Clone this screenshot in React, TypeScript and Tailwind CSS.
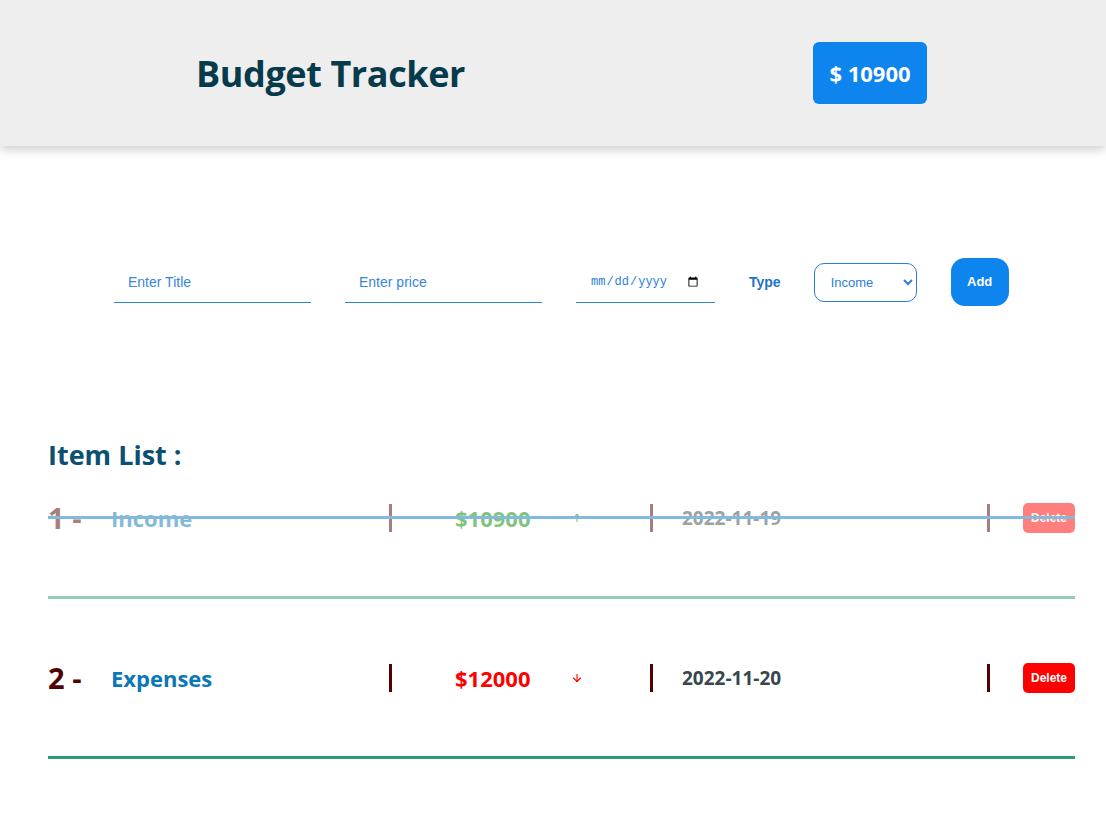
import { useState } from 'react'
import { ArrowUp, ArrowDown } from 'lucide-react'

type Item = {
  id: number
  title: string
  price: number
  date: string
  type: 'Income' | 'Expenses'
  done: boolean
}

const initialItems: Item[] = [
  { id: 1, title: 'Income', price: 10900, date: '2022-11-19', type: 'Income', done: true },
  { id: 2, title: 'Expenses', price: 12000, date: '2022-11-20', type: 'Expenses', done: false },
]

function Bar() {
  return <div className="w-[3px] h-[28px] bg-[#520000]" />
}

function ItemRow({ item, index, onDelete }: { item: Item; index: number; onDelete: (id: number) => void }) {
  const isIncome = item.type === 'Income'
  return (
    <div className={item.done ? 'opacity-50' : ''}>
      <div className="relative flex items-center h-[42px]">
        <div className="w-[63px] text-[29px] font-bold text-[#520000]">{index + 1} -</div>
        <div className="w-[278px] text-[22px] font-bold text-[#0a77b6]">{item.title}</div>
        <Bar />
        <div className="flex items-center w-[258px] pl-[63px]">
          <div className={`w-[116px] text-[22px] font-bold ${isIncome ? 'text-[#008800]' : 'text-[#ff0000]'}`}>
            ${item.price}
          </div>
          {isIncome ? (
            <ArrowUp size={12} strokeWidth={2.2} className="text-[#008800]" />
          ) : (
            <ArrowDown size={12} strokeWidth={2.2} className="text-[#ff0000]" />
          )}
        </div>
        <Bar />
        <div className="w-[334px] pl-[29px] text-[19px] font-bold text-[#36474f]">{item.date}</div>
        <Bar />
        <button
          onClick={() => onDelete(item.id)}
          className="ml-auto w-[52px] h-[30px] rounded-[5px] bg-[#ff0000] text-white text-[12px] font-bold font-['Liberation_Sans',Arial,sans-serif]"
        >
          Delete
        </button>
        {item.done && <div className="absolute left-0 right-0 top-[19px] h-[3px] bg-[#0a77b6]" />}
      </div>
      <div className="mt-[57px] h-[3px] bg-[#2f9a78]" />
    </div>
  )
}

export default function App() {
  const [items, setItems] = useState<Item[]>(initialItems)
  const [title, setTitle] = useState('')
  const [price, setPrice] = useState('')
  const [date, setDate] = useState('')
  const [type, setType] = useState<'Income' | 'Expenses'>('Income')

  const balance = 10900

  const addItem = () => {
    if (!title || !price) return
    setItems([...items, { id: Date.now(), title, price: Number(price), date, type, done: false }])
    setTitle('')
    setPrice('')
  }

  return (
    <div className="min-h-screen bg-white font-['Open_Sans','Noto_Sans',sans-serif]">
      <header className="flex items-center h-[146px] bg-[#eeeeee] shadow-[0_4px_10px_rgba(0,0,0,0.18)]">
        <h1 className="ml-[196px] mt-[2px] text-[36px] font-bold text-[#073b4c] tracking-[-0.4px]">Budget Tracker</h1>
        <div className="ml-auto mr-[179px] w-[114px] h-[62px] rounded-[6px] bg-[#0d84ee] flex items-center justify-center text-white text-[22px] font-bold">
          $ {balance}
        </div>
      </header>

      <div className="flex items-center gap-[34px] pl-[114px] mt-[112px] font-['Liberation_Sans',Arial,sans-serif]">
        <input
          value={title}
          onChange={(e) => setTitle(e.target.value)}
          placeholder="Enter Title"
          className="w-[197px] h-[41px] px-[14px] border-b border-[#2a86d6] text-[14px] text-[#2a7fd4] placeholder:text-[#3a86d8] outline-none"
        />
        <input
          value={price}
          onChange={(e) => setPrice(e.target.value)}
          placeholder="Enter price"
          className="w-[197px] h-[41px] px-[14px] border-b border-[#2a86d6] text-[14px] text-[#2a7fd4] placeholder:text-[#3a86d8] outline-none"
        />
        <input
          type="date"
          value={date}
          onChange={(e) => setDate(e.target.value)}
          className="w-[139px] h-[42px] px-[14px] border-b border-[#2a86d6] text-[12px] text-[#2a7fd4] font-['Liberation_Mono',monospace] outline-none"
        />
        <label className="-mr-[1px] text-[14px] font-bold text-[#1c74c9]">Type</label>
        <select
          value={type}
          onChange={(e) => setType(e.target.value as 'Income' | 'Expenses')}
          className="w-[103px] h-[39px] px-[12px] rounded-[10px] border border-[#2a7fd4] text-[13px] text-[#2a7fd4] bg-white outline-none"
        >
          <option>Income</option>
          <option>Expenses</option>
        </select>
        <button
          onClick={addItem}
          className="w-[58px] h-[48px] rounded-[14px] bg-[#0d84ee] text-white text-[13px] font-bold"
        >
          Add
        </button>
      </div>

      <div className="px-[48px] pr-[31px] mt-[132px]">
        <h2 className="text-[27px] font-bold text-[#0b4f72] leading-[34px]">Item List :</h2>
        <div className="mt-[25px] flex flex-col gap-[58px]">
          {items.map((item, i) => (
            <ItemRow key={item.id} item={item} index={i} onDelete={(id) => setItems(items.filter((x) => x.id !== id))} />
          ))}
        </div>
      </div>
    </div>
  )
}
